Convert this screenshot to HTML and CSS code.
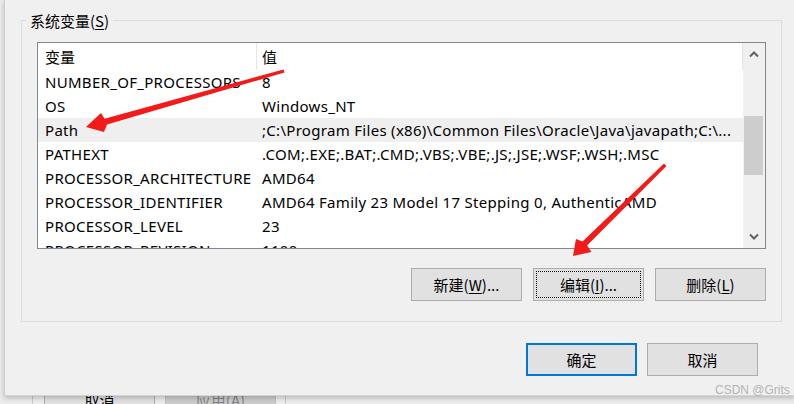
FILE: index.html
```html
<!DOCTYPE html>
<html lang="zh-CN">
<head>
<meta charset="utf-8">
<title>系统变量</title>
<link rel="stylesheet" href="styles.css">
</head>
<body>
<div class="desk">
  <div class="behind">
    <div class="behind-line line-a"></div>
    <div class="behind-btn btn-cancel-b">取消</div>
    <div class="behind-btn btn-apply-b">应用(<u>A</u>)</div>
    <div class="behind-line line-b"></div>
  </div>

  <div class="dialog">
    <div class="group">
      <div class="group-title">系统变量(<u>S</u>)</div>
      <div class="listbox">
        <div class="table">
          <div class="row head">
            <div class="c1">变量</div>
            <div class="c2">值</div>
          </div>
          <div class="row"><div class="c1">NUMBER_OF_PROCESSORS</div><div class="c2">8</div></div>
          <div class="row"><div class="c1">OS</div><div class="c2">Windows_NT</div></div>
          <div class="row sel"><div class="c1">Path</div><div class="c2">;C:\Program Files (x86)\Common Files\Oracle\Java\javapath;C:\...</div></div>
          <div class="row"><div class="c1">PATHEXT</div><div class="c2">.COM;.EXE;.BAT;.CMD;.VBS;.VBE;.JS;.JSE;.WSF;.WSH;.MSC</div></div>
          <div class="row"><div class="c1">PROCESSOR_ARCHITECTURE</div><div class="c2">AMD64</div></div>
          <div class="row"><div class="c1">PROCESSOR_IDENTIFIER</div><div class="c2">AMD64 Family 23 Model 17 Stepping 0, AuthenticAMD</div></div>
          <div class="row"><div class="c1">PROCESSOR_LEVEL</div><div class="c2">23</div></div>
          <div class="row"><div class="c1">PROCESSOR_REVISION</div><div class="c2">1100</div></div>
        </div>
        <div class="scrollbar">
          <div class="sb-btn">
            <svg width="12" height="8" viewBox="0 0 12 8"><path d="M2 6.5 L6 2.5 L10 6.5" fill="none" stroke="#606060" stroke-width="2"/></svg>
          </div>
          <div class="sb-track"><div class="sb-thumb"></div></div>
          <div class="sb-btn">
            <svg width="12" height="8" viewBox="0 0 12 8"><path d="M2 1.5 L6 5.5 L10 1.5" fill="none" stroke="#606060" stroke-width="2"/></svg>
          </div>
        </div>
      </div>
      <div class="btn-row">
        <div class="btn">新建(<u>W</u>)...</div>
        <div class="btn focus"><span class="focus-rect">编辑(<u>I</u>)...</span></div>
        <div class="btn">删除(<u>L</u>)</div>
      </div>
    </div>
    <div class="dlg-row">
      <div class="btn default">确定</div>
      <div class="btn">取消</div>
    </div>
  </div>

  <svg class="arrows" width="794" height="404" viewBox="0 0 794 404">
    <polygon fill="#f41a1a" points="86,127 101,113 104.5,118.8 283.5,69.5 284.5,72.5 107,124.6 104,132"/>
    <polygon fill="#f41a1a" points="573,256 576,239 582.5,241.5 664,163.5 666.5,166 587,245.5 591.5,252"/>
  </svg>

  <div class="watermark">CSDN @Grits<span class="dots"><i></i><i></i><i></i><i></i><i></i><i></i></span></div>
</div>
</body>
</html>
```
FILE: styles.css
```css
* { box-sizing: border-box; }
html, body { margin: 0; padding: 0; }
body {
  width: 794px;
  height: 404px;
  overflow: hidden;
  background: #ececec;
  font-family: "Noto Sans", "Noto Sans CJK SC", sans-serif;
  font-size: 15px;
  color: #000;
}
u { text-decoration: underline; text-underline-offset: 2px; }

.desk { position: relative; width: 794px; height: 404px; overflow: hidden; }

/* window behind the dialog */
.behind { position: absolute; left: 0; top: 0; width: 794px; height: 404px; background: #ececec; }
.behind-btn {
  position: absolute;
  top: 383px;
  height: 33px;
  width: 111px;
  border: 1px solid #adadad;
  background: #e1e1e1;
  display: flex;
  align-items: center;
  justify-content: center;
  font-family: "Noto Sans CJK SC", sans-serif;
}
.btn-cancel-b { left: 44px; }
.btn-apply-b { left: 165px; background: #cccccc; color: #838383; border-color: #bfbfbf; }
.behind-line { position: absolute; top: 380px; width: 1px; height: 30px; background: #c8c8c8; }
.line-a { left: 32px; }
.line-b { left: 285px; }

/* the dialog window */
.dialog {
  position: absolute;
  left: 4px;
  top: -1px;
  width: 792px;
  height: 397px;
  background: #f0f0f0;
  border-left: 1px solid #cfcfcf;
  border-bottom: 1px solid #d4d4d4;
  box-shadow: 0 2px 5px rgba(0,0,0,0.22);
  padding: 21px 0 0 16px;
}

.group {
  position: relative;
  width: 761px;
  border: 1px solid #dcdcdc;
  padding: 21px 15px 20px 15px;
}
.group-title {
  position: absolute;
  left: 4px;
  top: -10px;
  padding: 0 4px;
  background: #f0f0f0;
  line-height: 20px;
  font-family: "Noto Sans CJK SC", sans-serif;
}

.listbox {
  display: flex;
  width: 729px;
  height: 207px;
  border: 1px solid #828790;
  background: #fff;
}
.table { width: 705px; height: 205px; overflow: hidden; }
.row { display: flex; height: 24px; align-items: center; white-space: nowrap; letter-spacing: 0.3px; }
.row.head { height: 27px; letter-spacing: 0; }
.row.head .c1 { border-right: 1px solid #e5e5e5; height: 27px; }
.row.head .c2 { border-right: 1px solid #e5e5e5; height: 27px; }
.row.head > div { display: flex; align-items: center; font-family: "Noto Sans CJK SC", sans-serif; }
.c1 { width: 219px; padding-left: 7px; flex: none; overflow: hidden; }
.c2 { flex: 1; padding-left: 5px; overflow: hidden; }
.row.sel { background: #efefef; }

.scrollbar { width: 22px; height: 205px; background: #f0f0f0; display: flex; flex-direction: column; }
.sb-btn { height: 22px; display: flex; align-items: center; justify-content: center; flex: none; }
.sb-track { flex: 1; padding: 51px 2px 0 1px; }
.sb-thumb { height: 59px; background: #cdcdcd; }

.btn-row {
  display: flex;
  justify-content: flex-end;
  gap: 11px;
  margin-top: 19px;
}
.btn {
  width: 111px;
  height: 33px;
  border: 1px solid #adadad;
  background: #e1e1e1;
  display: flex;
  align-items: center;
  justify-content: center;
  font-family: "Noto Sans CJK SC", sans-serif;
  font-size: 15px;
}
.btn.focus { padding: 2px; }
.focus-rect {
  width: 100%;
  height: 100%;
  border: 1px dotted #000;
  display: flex;
  align-items: center;
  justify-content: center;
}
.btn.default { border: 2px solid #0078d7; }

.dlg-row {
  display: flex;
  justify-content: flex-end;
  gap: 10px;
  width: 761px;
  padding-right: 24px;
  margin-top: 21px;
}

.arrows { position: absolute; left: 0; top: 0; }

.watermark {
  position: absolute;
  left: 715px;
  top: 383px;
  white-space: nowrap;
  font-family: "Liberation Sans", Arial, sans-serif;
  font-size: 12px;
  color: #b4b4b4;
  display: flex;
  align-items: center;
  gap: 5px;
}
.dots { display: grid; grid-template-columns: repeat(3, 3px); gap: 1px; }
.dots i { width: 3px; height: 3px; background: #bdbdbd; display: block; }
.dots i:first-child { visibility: hidden; }
```
